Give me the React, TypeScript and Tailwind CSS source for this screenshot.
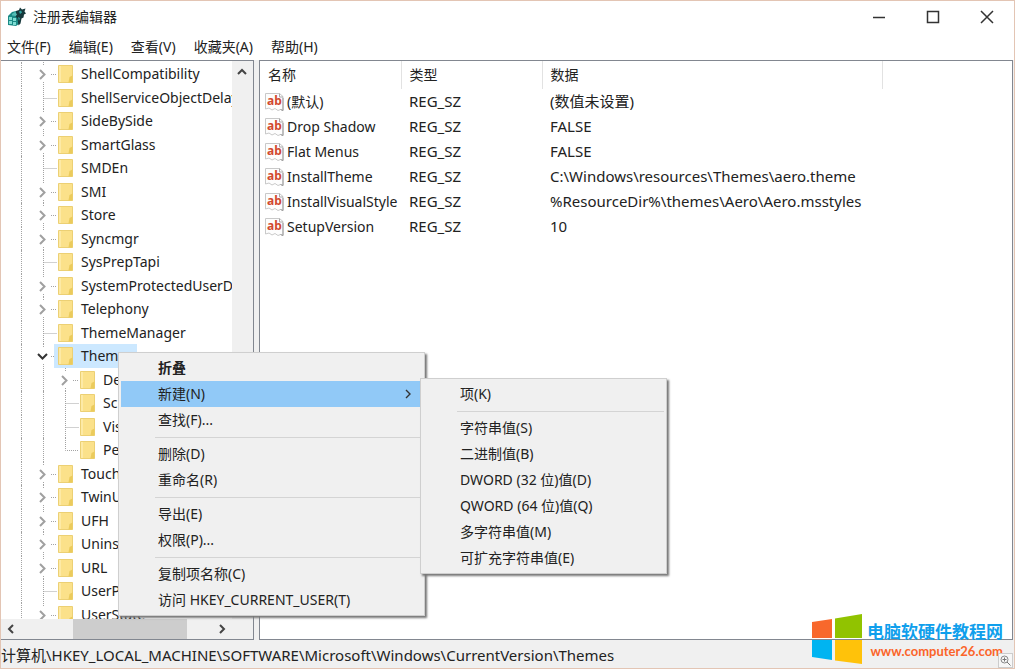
import { useState } from "react";
import clsx from "clsx";

type TreeNode = {
  name: string;
  depth?: number;
  kind?: "closed" | "open" | "leaf" | "last";
};

type RegistryValue = { name: string; type: string; data: string };

const nodes: TreeNode[] = [
  { name: "ShellCompatibility", kind: "closed" },
  { name: "ShellServiceObjectDelayLoad" },
  { name: "SideBySide", kind: "closed" },
  { name: "SmartGlass", kind: "closed" },
  { name: "SMDEn" },
  { name: "SMI", kind: "closed" },
  { name: "Store", kind: "closed" },
  { name: "Syncmgr", kind: "closed" },
  { name: "SysPrepTapi" },
  { name: "SystemProtectedUserData", kind: "closed" },
  { name: "Telephony", kind: "closed" },
  { name: "ThemeManager" },
  { name: "Themes", kind: "open" },
  { name: "DefaultColors", kind: "closed", depth: 1 },
  { name: "Scripts", depth: 1 },
  { name: "VisualStyles", depth: 1 },
  { name: "Personalize", kind: "last", depth: 1 },
  { name: "TouchKeyboard", kind: "closed" },
  { name: "TwinUI", kind: "closed" },
  { name: "UFH", kind: "closed" },
  { name: "Uninstall", kind: "closed" },
  { name: "URL", kind: "closed" },
  { name: "UserPictureChange" },
  { name: "UserState", kind: "closed" },
];

const values: RegistryValue[] = [
  { name: "(默认)", type: "REG_SZ", data: "(数值未设置)" },
  { name: "Drop Shadow", type: "REG_SZ", data: "FALSE" },
  { name: "Flat Menus", type: "REG_SZ", data: "FALSE" },
  {
    name: "InstallTheme",
    type: "REG_SZ",
    data: "C:\\Windows\\resources\\Themes\\aero.theme",
  },
  {
    name: "InstallVisualStyle",
    type: "REG_SZ",
    data: "%ResourceDir%\\themes\\Aero\\Aero.msstyles",
  },
  { name: "SetupVersion", type: "REG_SZ", data: "10" },
];

const menuBar = ["文件(F)", "编辑(E)", "查看(V)", "收藏夹(A)", "帮助(H)"];

const contextMenu = [
  ["折叠", "新建(N)", "查找(F)..."],
  ["删除(D)", "重命名(R)"],
  ["导出(E)", "权限(P)..."],
  ["复制项名称(C)", "访问 HKEY_CURRENT_USER(T)"],
];

const newMenu = [
  ["项(K)"],
  [
    "字符串值(S)",
    "二进制值(B)",
    "DWORD (32 位)值(D)",
    "QWORD (64 位)值(Q)",
    "多字符串值(M)",
    "可扩充字符串值(E)",
  ],
];

const RegeditIcon = () => (
  <svg width="20" height="20" viewBox="0 0 20 20" aria-hidden="true">
    <path d="M1 9l4-4 4-1 4 5-1 8-3 2-8-1z" fill="#1b8a86" />
    <path d="M2 10h3v3H2zM6 11h3v3H6zM2 14h3v3H2zM6 15h3v3H6z" fill="#7fdcd2" />
    <path d="M5 7l3-2 3 2-2 2-4-.5z" fill="#55bdb6" />
    <path
      d="M9 4l3-1 1-2.500 2 2 3.500-1-1 3 1.500 2-2 1-.5 3-2 1-1 5-2 2-1-7-2-2 1.500-2-1-1.500z"
      fill="#17393c"
    />
    <path d="M12 4.500l2-1 1 2-2 1.500zM11 10l2 1-1 3z" fill="#2fa3a2" />
  </svg>
);

const FolderIcon = () => (
  <svg
    width="15"
    height="20"
    viewBox="0 0 15 20"
    className="shrink-0"
    aria-hidden="true"
  >
    <path d="M.5 1.5h14v17H.5z" fill="#fbe18a" stroke="#ecd074" />
    <path d="M1 2h2v16H1z" fill="#fdeaa6" />
    <path d="M11.5 13l3-1.500v7h-4z" fill="#ebcb5c" />
  </svg>
);

const StringIcon = () => (
  <svg
    width="19"
    height="20"
    viewBox="0 0 19 20"
    className="shrink-0"
    aria-hidden="true"
  >
    <path
      d="M.5 1.500h14l3.500 3v14l-2.500-1-2.500 1-3-2-3 1.500-3-2-3.500 1z"
      fill="#fdfdfd"
      stroke="#c9c9c9"
    />
    <path d="M14.500 1.500v3.500h3.500" fill="none" stroke="#aaa" />
    <path d="M18 6v12.500l-2.500-1" fill="none" stroke="#999" />
    <text
      x="2"
      y="13"
      fill="#d2492f"
      fontSize="12"
      fontWeight="700"
      fontFamily="Noto Sans, sans-serif"
    >
      ab
    </text>
  </svg>
);

const Connector = ({ kind }: { kind: TreeNode["kind"] }) => {
  const isBranch = kind === "closed" || kind === "open";
  return (
    <svg
      width="15"
      height="24"
      viewBox="0 0 15 24"
      className="shrink-0 overflow-visible"
      fill="none"
      aria-hidden="true"
    >
      <g stroke="#a3a3a3" strokeDasharray="1 1">
        {isBranch ? (
          <path d="M.5 0v4M.5 20v4M8 12.500h5" />
        ) : (
          <path d={kind === "last" ? "M.5 0v12.500h13" : "M.5 0v24M.5 12.500h13"} />
        )}
      </g>
      {kind === "closed" && (
        <path d="M-3 8l4.500 4.500-4.500 4.500" stroke="#a0a0a0" strokeWidth="2" />
      )}
      {kind === "open" && (
        <path d="M-5 10l4.500 4.500 4.500-4.500" stroke="#333" strokeWidth="2" />
      )}
    </svg>
  );
};

const Arrow = ({ d }: { d: string }) => (
  <svg width="10" height="10" viewBox="0 0 10 10" aria-hidden="true">
    <path d={d} fill="none" stroke="#444" strokeWidth="2" />
  </svg>
);

const Tree = () => {
  const [selected, setSelected] = useState("Themes");

  return (
    <ul className="min-h-0 min-w-0 flex-1 overflow-hidden pt-px">
      {nodes.map(({ name, depth = 0, kind = "leaf" }) => (
        <li
          key={name}
          className="flex items-center overflow-hidden pl-5 odd:h-6 even:h-[23px]"
        >
          <span className="w-[22px] shrink-0 self-stretch border-l border-dotted border-[#a3a3a3]" />
          {depth > 0 && (
            <span className="w-[22px] shrink-0 self-stretch border-l border-dotted border-[#a3a3a3]" />
          )}
          <Connector kind={kind} />
          <button
            onClick={() => setSelected(name)}
            className={clsx(
              "-ml-1 flex h-full items-center gap-2 pr-1 pl-1 whitespace-nowrap",
              selected === name && "bg-[#cce8ff]"
            )}
          >
            <FolderIcon />
            {name}
          </button>
        </li>
      ))}
    </ul>
  );
};

const ValueTable = () => (
  <table className="w-full table-fixed text-left">
    <colgroup>
      <col className="w-[141px]" />
      <col className="w-[141px]" />
      <col className="w-[340px]" />
      <col />
    </colgroup>
    <thead>
      <tr className="h-7 [&>*]:border-r [&>*]:border-[#e2e2e2] [&>*]:pl-2 [&>*]:font-normal">
        <th>名称</th>
        <th>类型</th>
        <th>数据</th>
        <td className="border-r-0!"></td>
      </tr>
    </thead>
    <tbody>
      {values.map(({ name, type, data }) => (
        <tr key={name} className="h-[25px] whitespace-nowrap">
          <td className="pl-[5px]">
            <span className="flex items-center gap-[3px]">
              <StringIcon />
              {name}
            </span>
          </td>
          <td className="pb-0.5 pl-2 text-[15px]">{type}</td>
          <td className="pb-0.5 pl-2 text-[15px]">{data}</td>
          <td></td>
        </tr>
      ))}
    </tbody>
  </table>
);

type MenuProps = {
  groups: string[][];
  label: string;
  className: string;
  active?: string;
};

const Menu = ({ groups, label, className, active }: MenuProps) => (
  <div
    role="menu"
    aria-label={label}
    className={clsx(
      "absolute border border-[#cfcfcf] bg-[#f0f0f0] p-0.5 shadow-[2px_2px_2px_#777]",
      className
    )}
  >
    {groups.map((items, index) => (
      <div key={items[0]}>
        {index > 0 && (
          <div className="flex h-2 items-center pl-[34px]">
            <hr className="w-full border-[#d4d4d4]" />
          </div>
        )}
        {items.map((item) => (
          <button
            key={item}
            role="menuitem"
            className={clsx(
              "flex h-[26px] w-full items-center justify-between pr-2 pl-[37px] whitespace-nowrap",
              item === active ? "bg-[#91c9f7]" : "hover:bg-[#91c9f7]",
              item === "折叠" && "font-bold"
            )}
          >
            {item}
            {item === active && (
              <svg width="10" height="10" viewBox="0 0 10 10" aria-hidden="true">
                <path
                  d="M2 1l4 4-4 4"
                  fill="none"
                  stroke="#333"
                  strokeWidth="1.400"
                />
              </svg>
            )}
          </button>
        ))}
      </div>
    ))}
  </div>
);

const Watermark = () => (
  <div className="absolute right-3 bottom-[7px] flex items-center gap-[5px]">
    <svg width="50" height="50" viewBox="0 0 50 50" aria-hidden="true">
      <path d="M0 8l20-3v19H0z" fill="#f8682c" />
      <path d="M23 4.500L50 0v24H23z" fill="#91c300" />
      <path d="M0 26h20v20L0 43z" fill="#00b4f1" />
      <path d="M23 26h27v24l-27-3.500z" fill="#ffc20a" />
    </svg>
    <div className="flex flex-col items-end pt-1 font-bold whitespace-nowrap">
      <span className="text-[17px] leading-5 text-[#109fec]">
        电脑软硬件教程网
      </span>
      <a
        href="http://www.computer26.com"
        className="font-['Lato',sans-serif] text-[13px] leading-[18px] text-[#fb6429]"
      >
        www.computer26.com
      </a>
    </div>
  </div>
);

const App = () => {
  return (
    <div className="relative flex h-screen flex-col bg-white pb-0.5 font-['Noto_Sans','Noto_Sans_CJK_SC',sans-serif] text-[14px] leading-5 text-[#222]">
      <div className="flex min-h-0 flex-1 flex-col border border-[#e3c5b4]">
        <header className="flex h-8 shrink-0 items-center justify-between pr-5 pl-1.5">
          <h1 className="flex items-center gap-1.5">
            <RegeditIcon />
            注册表编辑器
          </h1>
          <div className="flex gap-10">
            <button aria-label="最小化">
              <svg width="14" height="14" viewBox="0 0 14 14">
                <path d="M1 7.500h12" stroke="#333" strokeWidth="1.500" />
              </svg>
            </button>
            <button aria-label="最大化">
              <svg width="14" height="14" viewBox="0 0 14 14">
                <path
                  d="M1.500 1.500h11v11h-11z"
                  fill="none"
                  stroke="#333"
                  strokeWidth="1.500"
                />
              </svg>
            </button>
            <button aria-label="关闭">
              <svg width="14" height="14" viewBox="0 0 14 14">
                <path d="M1 1l12 12M13 1L1 13" stroke="#333" strokeWidth="1.500" />
              </svg>
            </button>
          </div>
        </header>

        <nav className="flex h-[27px] shrink-0 items-center gap-[18px] pl-1.5">
          {menuBar.map((item) => (
            <button key={item}>{item}</button>
          ))}
        </nav>

        <main className="flex min-h-0 flex-1 gap-[5px] bg-[#f0f0f0] pr-px">
          <section className="flex w-[253px] shrink-0 flex-col border border-l-0 border-[#828790] bg-white">
            <div className="flex min-h-0 flex-1">
              <Tree />
              <div className="flex w-[21px] shrink-0 justify-center bg-[#f0f0f0] pt-1.5 pr-0.5">
                <Arrow d="M1 7l4-4 4 4" />
              </div>
            </div>
            <div className="flex h-5 shrink-0 items-center bg-[#f0f0f0]">
              <span className="flex w-[72px] pl-[5px]">
                <Arrow d="M7 1L3 5l4 4" />
              </span>
              <span className="h-full w-[114px] bg-[#cdcdcd]" />
              <span className="flex pl-[30px]">
                <Arrow d="M3 1l4 4-4 4" />
              </span>
            </div>
          </section>
          <section className="min-w-0 flex-1 overflow-hidden border border-[#828790] bg-white">
            <ValueTable />
          </section>
        </main>

        <footer className="flex h-7 shrink-0 items-center bg-[#f0f0f0] pt-0.5 text-[15px] whitespace-nowrap">
          计算机\HKEY_LOCAL_MACHINE\SOFTWARE\Microsoft\Windows\CurrentVersion\Themes
        </footer>
      </div>

      <Menu
        groups={contextMenu}
        label="项"
        active="新建(N)"
        className="top-[352px] left-[118px] w-[307px]"
      />
      <Menu
        groups={newMenu}
        label="新建"
        className="top-[378px] left-[420px] w-[247px]"
      />

      <Watermark />
      <button
        aria-label="放大"
        className="absolute right-0.5 bottom-[3px] border border-[#ccc] bg-[#f7f7f7] p-px"
      >
        <svg width="11" height="11" viewBox="0 0 11 11" fill="none">
          <circle cx="4.500" cy="4.500" r="3.500" stroke="#888" />
          <path d="M2.500 4.500h4M4.500 2.500v4M7 7l3.500 3.500" stroke="#777" />
        </svg>
      </button>
    </div>
  );
};

export default App;
